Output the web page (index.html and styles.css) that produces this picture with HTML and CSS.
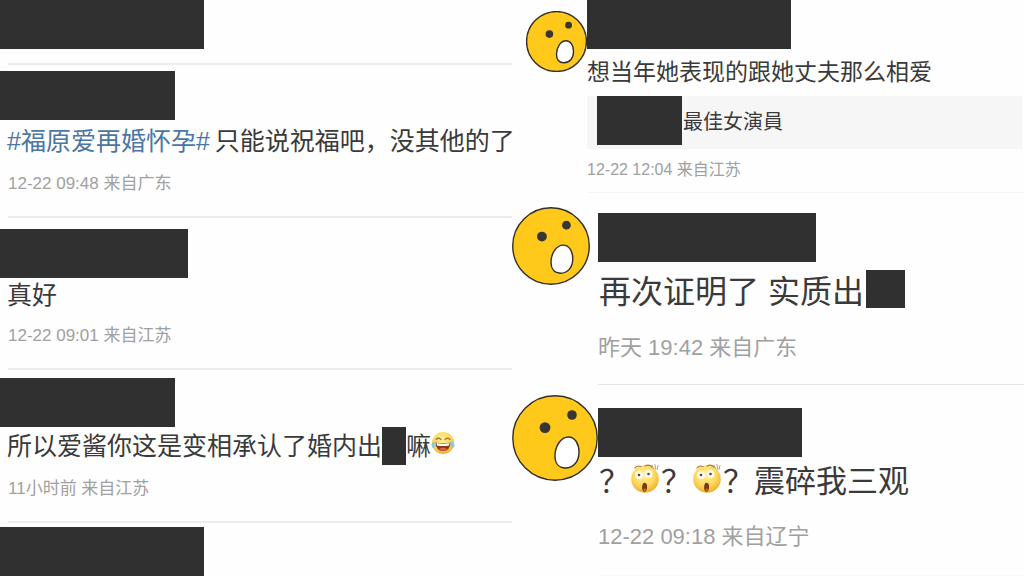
FILE: index.html
```
<!DOCTYPE html>
<html lang="zh-CN">
<head>
    <meta charset="UTF-8">
    <meta name="viewport" content="width=device-width, initial-scale=1.0">
    <title>微博评论</title>
    <link rel="stylesheet" href="styles.css">
</head>
<body>

    <!-- shared drawings -->
    <svg class="sprites" aria-hidden="true">
        <symbol id="face" viewBox="0 0 86 86">
            <circle class="face-skin" cx="43" cy="43" r="42.2"/>
            <circle class="face-eye" cx="33" cy="32.6" r="5.4"/>
            <circle class="face-eye" cx="60" cy="20" r="4.8"/>
            <path class="face-mouth" d="M56.500 42C63 42 67 49 67 57C67 67 61 73 53.500 73C46.500 73 43 68 43 61C43 51 49 42 56.500 42Z"/>
        </symbol>
        <symbol id="joy" viewBox="0 0 24 24">
            <circle cx="12" cy="12" r="11" fill="url(#skin)"/>
            <path d="M5 8.500Q7.500 6 10 8.500M14 8.500Q16.500 6 19 8.500" fill="none" stroke="#a87a34" stroke-width="1.200" stroke-linecap="round"/>
            <path d="M4.500 11.500Q12 13 19.500 11.500Q19 20 12 20Q5 20 4.500 11.500Z" fill="#8c3a1a"/>
            <path d="M5.500 12Q12 13.500 18.500 12L18 14.500Q12 15.500 6 14.500Z" fill="#fff"/>
            <path d="M8 18Q12 15.500 16 18Q12 21 8 18Z" fill="#e8604c"/>
            <path d="M5 10.500Q0 11 .5 15Q1 17.500 3 16.500Q5 15 5 10.500ZM19 10.500Q24 11 23.500 15Q23 17.500 21 16.500Q19 15 19 10.500Z" fill="#8fc8d4"/>
        </symbol>
        <symbol id="shock" viewBox="0 0 30 30">
            <circle cx="15" cy="16" r="13.800" fill="url(#skin)"/>
            <path d="M5 5Q7 2 11 3.500M15 3Q19 1 22 4" fill="none" stroke="#a87a34" stroke-width="1.200" stroke-linecap="round"/>
            <path d="M22 2L23.500 5.500M25 1.500L25.500 6M28 2.500L27 6.500" stroke="#c09a62" stroke-width="1" stroke-linecap="round"/>
            <circle cx="9" cy="12" r="4" fill="#fffbe8"/>
            <circle cx="18.500" cy="11" r="4" fill="#fffbe8"/>
            <circle cx="9" cy="12" r="1.300" fill="#5d4828"/>
            <circle cx="18.500" cy="11" r="1.300" fill="#5d4828"/>
            <path d="M13.500 20Q16 19 17 22Q17.500 28 14.500 29Q11.500 28 12.200 23Q12.500 21 13.500 20Z" fill="#7a3a14"/>
            <path d="M13.500 26Q14.500 25 16 26Q15.800 28 14.500 28.200Q13.500 28 13.500 26Z" fill="#d0702c"/>
        </symbol>
        <defs>
            <radialGradient id="skin" cx="0.45" cy="0.35" r="0.65">
                <stop offset="0" stop-color="#fff0a0"/>
                <stop offset="0.6" stop-color="#fdd95e"/>
                <stop offset="1" stop-color="#efae35"/>
            </radialGradient>
        </defs>
    </svg>

    <main class="board">
        <section class="column">
            <article class="post post-first">
                <div class="mask mask-wide"></div>
            </article>
            <article class="post post-topic">
                <div class="mask mask-short"></div>
                <p class="text"><a href="#">#福原爱再婚怀孕#</a> 只能说祝福吧，没其他的了</p>
                <p class="meta">12-22 09:48 来自广东</p>
            </article>
            <article class="post post-brief">
                <div class="mask mask-medium"></div>
                <p class="text">真好</p>
                <p class="meta">12-22 09:01 来自江苏</p>
            </article>
            <article class="post post-joy">
                <div class="mask mask-short"></div>
                <p class="text">所以爱酱你这是变相承认了婚内出<span class="mask-word"></span>嘛<svg class="emoji" role="img" aria-label="笑哭"><use href="#joy"/></svg></p>
                <p class="meta">11小时前 来自江苏</p>
            </article>
            <article class="post post-last">
                <div class="mask mask-wide"></div>
            </article>
        </section>

        <section class="column">
            <article class="reply reply-small">
                <div class="avatar"><svg class="face" aria-hidden="true"><use href="#face"/></svg></div>
                <div class="body">
                    <div class="mask mask-wide"></div>
                    <p class="text">想当年她表现的跟她丈夫那么相爱</p>
                    <blockquote class="quote"><span class="mask-name"></span>最佳女演員</blockquote>
                    <p class="meta">12-22 12:04 来自江苏</p>
                </div>
            </article>
            <article class="reply reply-medium">
                <div class="avatar"><svg class="face" aria-hidden="true"><use href="#face"/></svg></div>
                <div class="body">
                    <div class="mask mask-wider"></div>
                    <p class="text">再次证明了 实质出<span class="mask-word"></span></p>
                    <p class="meta">昨天 19:42 来自广东</p>
                </div>
            </article>
            <article class="reply reply-large">
                <div class="avatar"><svg class="face" aria-hidden="true"><use href="#face"/></svg></div>
                <div class="body">
                    <div class="mask mask-wide"></div>
                    <p class="text">？<svg class="emoji" role="img" aria-label="吃惊"><use href="#shock"/></svg>？<svg class="emoji" role="img" aria-label="吃惊"><use href="#shock"/></svg>？震碎我三观</p>
                    <p class="meta">12-22 09:18 来自辽宁</p>
                </div>
            </article>
        </section>
    </main>

</body>
</html>
```
FILE: styles.css
```
* {
    box-sizing: border-box;
}
body {
    margin: 0;
    background-color: #fefefe;
    color: #3a3a3a;
    font-family: "Liberation Sans", "Noto Sans CJK SC", sans-serif;
}
p, blockquote {
    margin: 0;
}
a {
    color: #4a76a4;
    text-decoration: none;
}
.sprites {
    position: absolute;
    width: 0;
    height: 0;
}
.board {
    display: grid;
    grid-template-columns: 1fr 1fr;
}
.column {
    min-width: 0;
}
.text, .meta {
    white-space: nowrap;
}
.meta {
    color: #a0a0a0;
}

/* blacked-out names and words */
.mask {
    height: 49px;
    background-color: #303030;
}
.mask-short {
    width: 175px;
}
.mask-medium {
    width: 188px;
}
.mask-wide {
    width: 204px;
}
.mask-wider {
    width: 218px;
}
.mask-word, .mask-name {
    display: inline-block;
    height: 38px;
    background-color: #303030;
    vertical-align: top;
}

/* left column */
.post {
    display: flow-root;
}
.post::after {
    content: "";
    display: block;
    height: 2px;
    margin: 20px 0 0 8px;
    background-color: #ececec;
}
.post .text {
    padding-left: 7px;
    font-size: 25px;
    line-height: 38px;
}
.post .meta {
    margin-top: 12px;
    padding-left: 8px;
    font-size: 17px;
    line-height: 24px;
}
.post .mask-word {
    width: 24px;
}
.post .emoji {
    width: 24px;
    height: 24px;
    margin-top: 4px;
    vertical-align: top;
}
.post-first::after {
    margin-top: 14px;
}
.post-topic {
    padding-top: 6px;
}
.post-topic .text {
    padding-top: 2px;
}
/* the long line runs right up to the column edge */
.post-topic a {
    margin-right: -2px;
}
.post-brief {
    padding-top: 11px;
}
.post-brief .text {
    line-height: 34px;
}
.post-joy {
    padding-top: 8px;
}
.post-last {
    padding-top: 4px;
}
.post-last::after {
    display: none;
}

/* right column */
.reply {
    display: flex;
}
.avatar {
    display: flex;
    flex: none;
    align-items: flex-start;
    width: 86px;
}
.face {
    flex: none;
    overflow: visible;
}
.face-skin {
    fill: #fec91b;
}
.face-eye {
    fill: #383632;
}
.face-mouth {
    fill: #fff;
}
.face-skin, .face-mouth {
    stroke: #332e28;
    stroke-width: 1.4px;
    vector-effect: non-scaling-stroke;
}
.body {
    flex: 1;
    min-width: 0;
    border-bottom: 1px solid #e6e6e6;
}
.body .text {
    font-size: 32px;
    line-height: 44px;
}
.body .meta {
    font-size: 22px;
    line-height: 28px;
}

.reply-small .avatar {
    justify-content: flex-end;
    width: 75px;
    padding-top: 11px;
}
.reply-small .face {
    width: 61px;
    height: 61px;
}
.reply-small .body {
    padding-bottom: 10px;
    border-color: #f4f4f4;
}
.reply-small .text {
    font-size: 23px;
    line-height: 47px;
}
.quote {
    margin-right: 2px;
    padding-left: 10px;
    background-color: #f6f6f6;
    font-size: 20px;
    line-height: 53px;
}
.mask-name {
    width: 85px;
    height: 49px;
    margin-right: 1px;
}
.reply-small .meta {
    margin-top: 9px;
    font-size: 16px;
    line-height: 24px;
}

.reply-medium .avatar {
    padding-top: 14px;
}
.reply-medium .face {
    width: 78px;
    height: 78px;
}
.reply-medium .body {
    padding: 20px 0 22px;
}
.reply-medium .text {
    padding: 8px 0 20px 1px;
}
.reply-medium .mask-word {
    width: 39px;
    margin-left: 2px;
}

.reply-large .avatar {
    padding-top: 10px;
}
.reply-large .face {
    width: 86px;
    height: 86px;
}
.reply-large .body {
    padding: 23px 0 24px;
    border-color: #f8f8f8;
}
.reply-large .text {
    padding: 3px 0 19px 1px;
    font-size: 31px;
}
.reply-large .emoji {
    width: 30px;
    height: 30px;
    margin: 3px 1px 0 0;
    vertical-align: top;
}
```
